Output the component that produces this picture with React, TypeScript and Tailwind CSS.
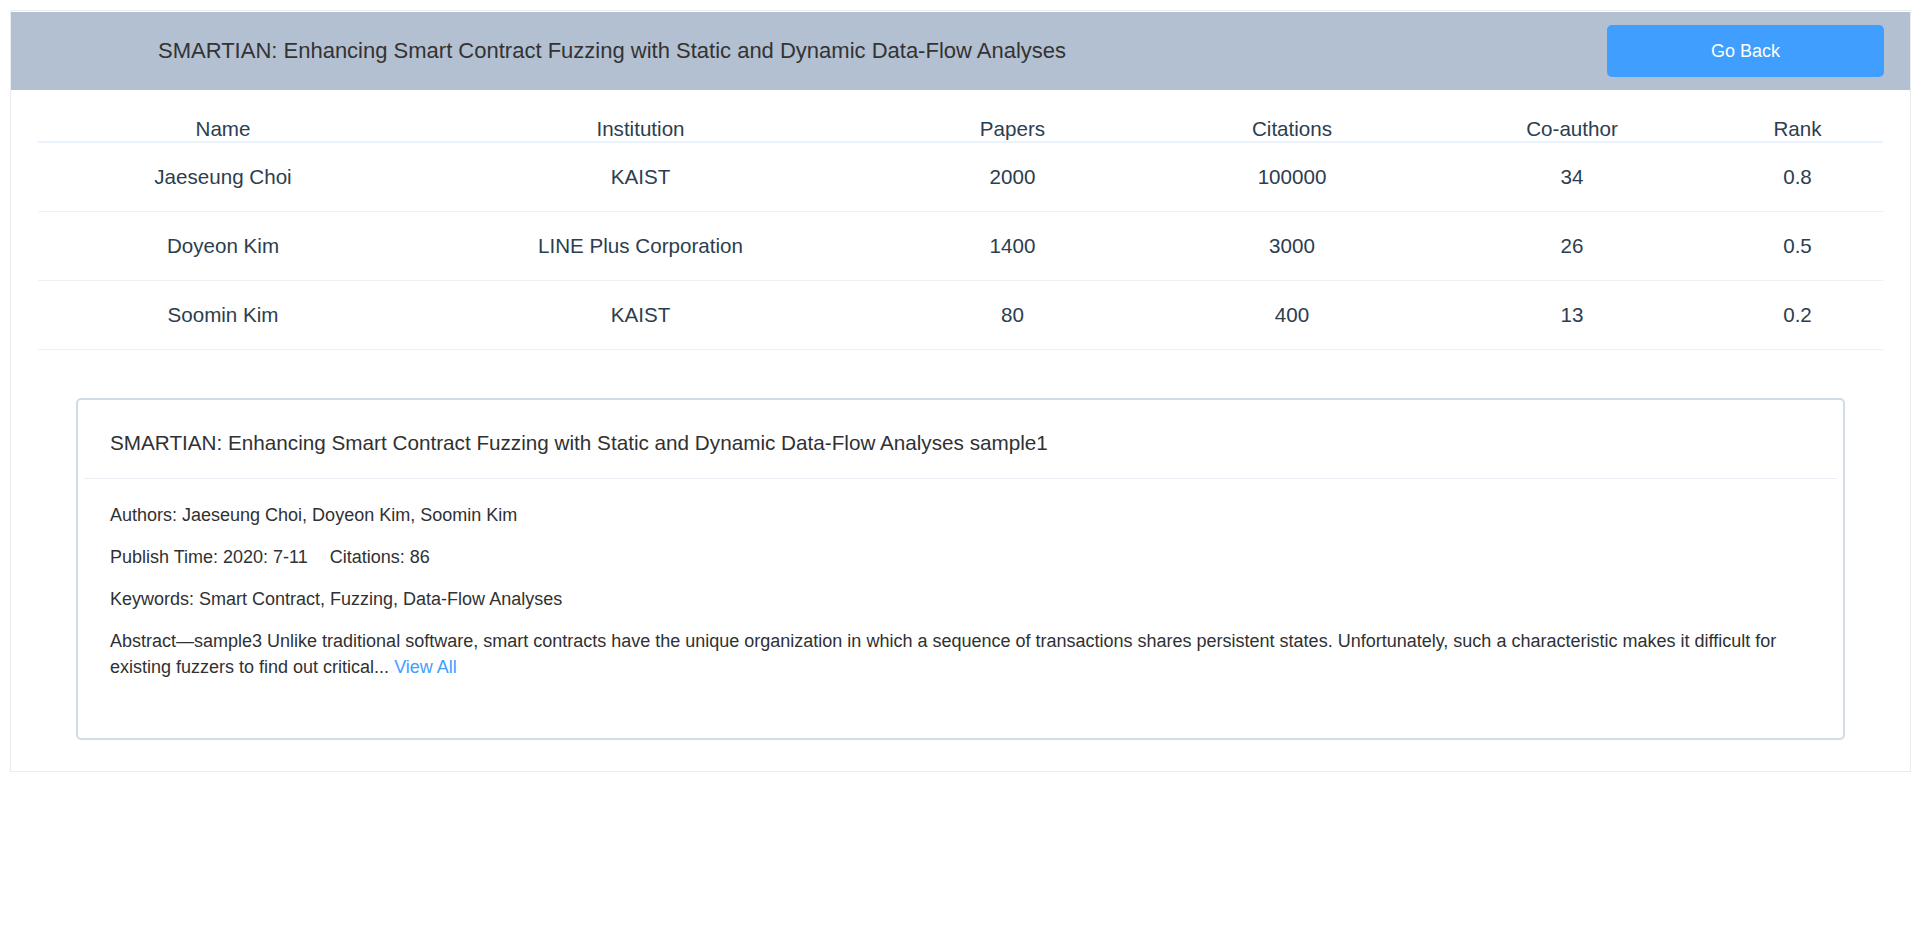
import React from "react";

const rows = [
  { name: "Jaeseung Choi", inst: "KAIST", papers: "2000", cites: "100000", co: "34", rank: "0.8" },
  { name: "Doyeon Kim", inst: "LINE Plus Corporation", papers: "1400", cites: "3000", co: "26", rank: "0.5" },
  { name: "Soomin Kim", inst: "KAIST", papers: "80", cites: "400", co: "13", rank: "0.2" },
];

const TITLE = "SMARTIAN: Enhancing Smart Contract Fuzzing with Static and Dynamic Data-Flow Analyses";

export default function App() {
  return (
    <div className="min-h-[948px] bg-white p-[10px] font-['Liberation_Sans',Arial,sans-serif]">
      <div className="border border-[#e9ebef] pb-[31px]">
        {/* Header band */}
        <div className="mt-[1px] flex h-[78px] items-center justify-between bg-[#b3c0d1] pl-[147px] pr-[26px]">
          <div className="text-[22px] leading-[26px] text-[#333]">{TITLE}</div>
          <button className="flex h-[52px] w-[277px] items-center justify-center rounded-[5px] bg-[#409eff] text-[18px] text-white">
            Go Back
          </button>
        </div>

        <div className="px-[27px]">
          {/* Table */}
          <div className="mt-[16px] text-[20.6px] leading-[24px] text-[#2c3e50]">
            <div className="grid grid-cols-[370px_465px_279px_280px_280px_1fr] border-b-2 border-[#eaf2fb] pt-[11px] pb-[0px] text-center">
              <div>Name</div>
              <div>Institution</div>
              <div>Papers</div>
              <div>Citations</div>
              <div>Co-author</div>
              <div>Rank</div>
            </div>
            {rows.map((r) => (
              <div
                key={r.name}
                className="grid h-[69px] grid-cols-[370px_465px_279px_280px_280px_1fr] items-center border-b border-[#edf1f7] text-center"
              >
                <div>{r.name}</div>
                <div>{r.inst}</div>
                <div>{r.papers}</div>
                <div>{r.cites}</div>
                <div>{r.co}</div>
                <div>{r.rank}</div>
              </div>
            ))}
          </div>

          {/* Card */}
          <div className="mx-[38px] mt-[48px] rounded-[5px] border-2 border-[#d3dce6] bg-white">
            <div className="mx-[6px] border-b border-[#ebeef5] px-[26px] pt-[31px] pb-[23px] text-[20.7px] leading-[24px] text-[#303133]">
              {TITLE} sample1
            </div>
            <div className="mx-[6px] px-[26px] pt-[24px] pb-[58px] text-[18px] leading-[25px] text-[#303133]">
              <p className="mb-[17px]">Authors: Jaeseung Choi, Doyeon Kim, Soomin Kim</p>
              <p className="mb-[17px]">
                Publish Time: 2020: 7-11<span className="ml-[22px]">Citations: 86</span>
              </p>
              <p className="mb-[16px]">Keywords: Smart Contract, Fuzzing, Data-Flow Analyses</p>
              <p className="leading-[26px]">
                Abstract—sample3 Unlike traditional software, smart contracts have the unique organization in which a
                sequence of transactions shares persistent states. Unfortunately, such a characteristic makes it
                difficult for existing fuzzers to find out critical...{" "}
                <span className="cursor-pointer text-[#409eff]">View All</span>
              </p>
            </div>
          </div>
        </div>
      </div>
    </div>
  );
}
